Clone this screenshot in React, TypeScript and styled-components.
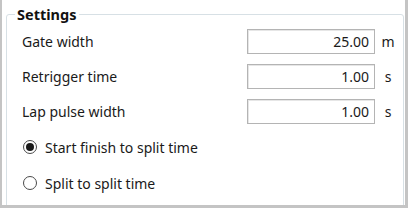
import { createGlobalStyle, styled } from "styled-components";

const GlobalStyle = createGlobalStyle`
    html, body {
        margin: 0;
        padding: 0;
        background: #ffffff;
    }
    body {
        font-family: "Noto Sans", "Open Sans", sans-serif;
        color: #1a1a1a;
    }
`;

const fields = [
    { label: "Gate width", value: "25.00", unit: "m" },
    { label: "Retrigger time", value: "1.00", unit: "s" },
    { label: "Lap pulse width", value: "1.00", unit: "s" },
];

const modes = [
    { label: "Start finish to split time", checked: true },
    { label: "Split to split time", checked: false },
];

const Radio = ({ checked, label }) => {
    return (
        <RadioRow>
            <RadioCircle $checked={checked} />
            <RadioText>{label}</RadioText>
        </RadioRow>
    );
};

export default () => {
    return (
        <Frame>
            <GlobalStyle />
            <Group>
                <Legend>Settings</Legend>
                <FieldGrid>
                    {fields.map((f) => (
                        <FieldRow key={f.label}>
                            <Label>{f.label}</Label>
                            <NumberBox readOnly value={f.value} />
                            <Unit>{f.unit}</Unit>
                        </FieldRow>
                    ))}
                </FieldGrid>
                <RadioList>
                    {modes.map((m) => (
                        <Radio key={m.label} checked={m.checked} label={m.label} />
                    ))}
                </RadioList>
            </Group>
        </Frame>
    );
};

const Frame = styled.div`
    width: 408px;
    height: 208px;
    box-sizing: border-box;
    border: 2px solid #c4c4c4;
    border-top: none;
    border-right-width: 3px;
    border-bottom-width: 3px;
    padding: 4px 1px 0 4px;
    background: #ffffff;
    overflow: hidden;
`;

const Group = styled.fieldset`
    margin: 0;
    padding: 5px 2px 20px 15px;
    border: 1px solid #d7e0e5;
    border-radius: 3px;
    min-width: 0;
    height: 220px;
    box-sizing: border-box;
`;

const Legend = styled.legend`
    margin-left: -7px;
    padding: 0 3px 0 2px;
    font-size: 14.5px;
    font-weight: 700;
    line-height: 20px;
    color: #111111;
`;

const FieldGrid = styled.div`
    display: flex;
    flex-direction: column;
    gap: 10px;
`;

const FieldRow = styled.div`
    display: grid;
    grid-template-columns: 1fr 128px 26px;
    align-items: center;
    height: 25px;
`;

const Label = styled.span`
    font-size: 14px;
    color: #1a1a1a;
`;

const NumberBox = styled.input`
    box-sizing: border-box;
    width: 128px;
    height: 25px;
    border: 1px solid #b4b4b4;
    box-shadow: inset 1px 1px 0 #e6e6e6;
    padding: 0 5px 0 4px;
    text-align: right;
    font-family: "Noto Sans", "Open Sans", sans-serif;
    font-size: 14px;
    color: #1a1a1a;
    background: #ffffff;
    outline: none;
`;

const Unit = styled.span`
    font-size: 14px;
    text-align: center;
    color: #1a1a1a;
`;

const RadioList = styled.div`
    display: flex;
    flex-direction: column;
    gap: 12px;
    margin-top: 11px;
`;

const RadioRow = styled.div`
    display: flex;
    align-items: center;
    gap: 8px;
    height: 24px;
    padding-left: 1px;
`;

const RadioCircle = styled.span<{ $checked: boolean }>`
    width: 14px;
    height: 14px;
    box-sizing: border-box;
    border-radius: 50%;
    border: 1px solid #4a4a4a;
    display: flex;
    justify-content: center;
    align-items: center;
    &::after {
        content: "";
        width: 8px;
        height: 8px;
        border-radius: 50%;
        background: #1a1a1a;
        display: ${(props) => (props.$checked ? "block" : "none")};
    }
`;

const RadioText = styled.span`
    font-size: 14px;
    color: #1a1a1a;
`;
